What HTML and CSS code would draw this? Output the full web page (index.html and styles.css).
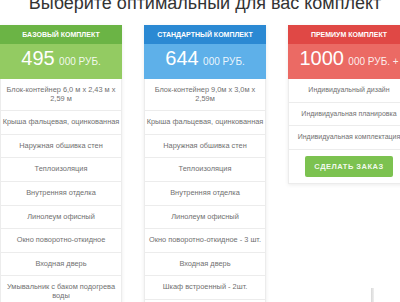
FILE: index.html
```html
<!DOCTYPE html>
<html lang="ru">
<head>
<meta charset="utf-8">
<title>Комплекты</title>
<link rel="stylesheet" href="styles.css">
</head>
<body>
<div class="page">
  <h1 class="title">Выберите оптимальный для вас комплект</h1>
  <div class="plans">
    <div class="plan plan--green">
      <div class="plan-head">БАЗОВЫЙ КОМПЛЕКТ</div>
      <div class="plan-price"><span class="num">495</span> <span class="cur">000 РУБ.</span></div>
      <ul class="plan-list">
        <li>Блок-контейнер 6,0 м x 2,43 м x 2,59 м</li>
        <li>Крыша фальцевая, оцинкованная</li>
        <li>Наружная обшивка стен</li>
        <li>Теплоизоляция</li>
        <li>Внутренняя отделка</li>
        <li>Линолеум офисный</li>
        <li>Окно поворотно-откидное</li>
        <li>Входная дверь</li>
        <li>Умывальник с баком подогрева воды</li>
      </ul>
    </div>
    <div class="plan plan--blue">
      <div class="plan-head">СТАНДАРТНЫЙ КОМПЛЕКТ</div>
      <div class="plan-price"><span class="num">644</span> <span class="cur">000 РУБ.</span></div>
      <ul class="plan-list">
        <li>Блок-контейнер 9,0м x 3,0м x 2,59м</li>
        <li>Крыша фальцевая, оцинкованная</li>
        <li>Наружная обшивка стен</li>
        <li>Теплоизоляция</li>
        <li>Внутренняя отделка</li>
        <li>Линолеум офисный</li>
        <li>Окно поворотно-откидное - 3 шт.</li>
        <li>Входная дверь</li>
        <li>Шкаф встроенный - 2шт.</li>
        <li>Умывальник с баком подогрева воды</li>
      </ul>
    </div>
    <div class="plan plan--red">
      <div class="plan-head">ПРЕМИУМ КОМПЛЕКТ</div>
      <div class="plan-price"><span class="num">1000</span> <span class="cur">000 РУБ. +</span></div>
      <ul class="plan-list plan-list--small">
        <li>Индивидуальный дизайн</li>
        <li>Индивидуальная планировка</li>
        <li>Индивидуальная комплектация</li>
        <li class="plan-action"><button class="btn">СДЕЛАТЬ ЗАКАЗ</button></li>
      </ul>
    </div>
  </div>
</div>
<div class="edge"></div>
</body>
</html>
```

FILE: styles.css
```css
html, body {
  margin: 0;
  padding: 0;
  background: #ffffff;
  overflow: hidden;
}
body {
  width: 400px;
  height: 302px;
  position: relative;
  font-family: "Liberation Sans", Arial, sans-serif;
}
.page {
  width: 410px;
}
.title {
  margin: 0;
  height: 25px;
  font-size: 18px;
  line-height: 6px;
  font-weight: normal;
  color: #333333;
  text-align: center;
}
.plans {
  display: grid;
  grid-template-columns: repeat(3, 122px);
  column-gap: 22px;
  align-items: start;
}
.plan {
  box-shadow: 0 1px 4px rgba(0, 0, 0, 0.08);
}
.plan-head {
  height: 19px;
  line-height: 19px;
  font-size: 7px;
  font-weight: bold;
  color: #ffffff;
  text-align: center;
}
.plan-price {
  height: 35px;
  line-height: 29px;
  color: #ffffff;
  text-align: center;
  white-space: nowrap;
}
.num {
  font-size: 20px;
}
.cur {
  font-size: 10px;
  color: rgba(255, 255, 255, 0.9);
}
.plan--green .plan-head { background: #6bb445; }
.plan--green .plan-price { background: #93cb62; }
.plan--blue .plan-head { background: #2b89d3; }
.plan--blue .plan-price { background: #5eb0e9; }
.plan--red .plan-head { background: #e04845; }
.plan--red .plan-price { background: #eb6a64; }
.plan-list {
  margin: 0;
  padding: 0;
  list-style: none;
  border-left: 1px solid #ececec;
  border-right: 1px solid #ececec;
}
.plan-list li {
  padding: 7px 0;
  font-size: 7.4px;
  line-height: 8.6px;
  color: #707070;
  text-align: center;
  border-bottom: 1px solid #ececec;
}
.plan-list--small li {
  font-size: 7px;
}
.plan-list .plan-action {
  padding: 6px 0;
  display: flex;
  justify-content: center;
}
.btn {
  width: 88px;
  height: 21px;
  border: 0;
  border-radius: 2px;
  background: #7cc250;
  color: rgba(255, 255, 255, 0.92);
  font-family: "Liberation Sans", Arial, sans-serif;
  font-size: 7.5px;
  font-weight: bold;
  letter-spacing: 0.5px;
  padding: 0;
}
.edge {
  position: absolute;
  left: 371px;
  top: 288px;
  width: 3px;
  height: 14px;
  background: linear-gradient(to right, #d8d8d8, #efefef);
}
```
